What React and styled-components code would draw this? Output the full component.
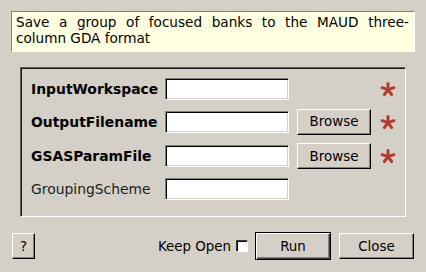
import React from 'react';
import styled, { createGlobalStyle } from 'styled-components';

const GlobalStyle = createGlobalStyle`
  html, body {
    margin: 0;
    padding: 0;
    background: #d4d0c8;
  }
  body {
    font-family: "DejaVu Sans", "Liberation Sans", sans-serif;
    font-size: 13.4px;
    color: #000;
  }
`;

const Dialog = styled.div`
  width: 426px;
  height: 272px;
  box-sizing: border-box;
  background: #d4d0c8;
  padding: 11px 11px 0 11px;
  display: flex;
  flex-direction: column;
`;

const Description = styled.div`
  box-sizing: border-box;
  height: 41px;
  background: #ffffe1;
  border-top: 1px solid #808080;
  border-left: 1px solid #808080;
  border-bottom: 1px solid #ffffff;
  border-right: 1px solid #ffffff;
  padding: 2px 5px 0 4px;
  line-height: 16px;
  font-size: 13.6px;
`;

const DescLine = styled.div`
  text-align: ${p => (p.$justify ? 'justify' : 'left')};
  text-align-last: ${p => (p.$justify ? 'justify' : 'left')};
  white-space: nowrap;
`;

const GroupBox = styled.div`
  box-sizing: border-box;
  margin: 15px 9px 0 9px;
  height: 150px;
  border-top: 1px solid #5a5a5a;
  border-left: 1px solid #5a5a5a;
  border-bottom: 1px solid #ffffff;
  border-right: 1px solid #ffffff;
  box-shadow: inset 1px 1px 0 #1a1a1a;
  padding: 10px 0 0 10px;
  display: grid;
  grid-template-columns: 134px 124px 91px 24px;
  grid-template-rows: 22px 26px 26px 22px;
  align-content: start;
  row-gap: 8.5px;
  align-items: center;
`;

const Label = styled.span`
  font-size: 13.9px;
  font-weight: ${p => (p.$required ? 'bold' : 'normal')};
  color: ${p => (p.$required ? '#000' : '#222')};
  white-space: nowrap;
`;

const Field = styled.input`
  box-sizing: border-box;
  width: 124px;
  height: 22px;
  margin: 0;
  background: #fff;
  border-top: 1px solid #808080;
  border-left: 1px solid #808080;
  border-bottom: 1px solid #ffffff;
  border-right: 1px solid #ffffff;
  box-shadow: inset 1px 1px 0 #000, inset -1px -1px 0 #d4d0c8;
  outline: none;
`;

const Button = styled.button`
  box-sizing: border-box;
  font-family: "DejaVu Sans", "Liberation Sans", sans-serif;
  font-size: 13.4px;
  color: #000;
  background: #d4d0c8;
  width: ${p => p.$w}px;
  height: 26px;
  margin: 0;
  padding: 0;
  border-top: 1px solid #ffffff;
  border-left: 1px solid #ffffff;
  border-bottom: 1px solid #000;
  border-right: 1px solid #000;
  box-shadow: inset -1px -1px 0 #808080;
`;

const DefaultButton = styled(Button)`
  height: 28px;
  border: 1px solid #000;
  box-shadow: inset 1px 1px 0 #ffffff, inset -1px -1px 0 #404040, inset -2px -2px 0 #808080;
`;

const BrowseCell = styled.div`
  display: flex;
  align-items: center;
  padding-left: 8px;
`;

const StarCell = styled.div`
  display: flex;
  align-items: center;
  justify-content: flex-start;
`;

const Footer = styled.div`
  display: flex;
  align-items: center;
  margin-top: 15px;
  padding-left: 1px;
  padding-right: 1px;
`;

const Spacer = styled.div`
  flex: 1;
`;

const KeepOpen = styled.label`
  display: flex;
  align-items: center;
  gap: 5px;
  margin-right: 7px;
`;

const CheckBox = styled.span`
  box-sizing: border-box;
  width: 12px;
  height: 12px;
  background: #fff;
  border-top: 1px solid #404040;
  border-left: 1px solid #404040;
  border-bottom: 1px solid #ffffff;
  border-right: 1px solid #ffffff;
  box-shadow: inset 1px 1px 0 #000;
`;

const FooterGap = styled.div`
  width: 8px;
`;

const Star = () => (
  <svg width="16" height="16" viewBox="0 0 16 16">
    <g stroke="#b33a2c" strokeWidth="3" strokeLinecap="round">
      {[0, 72, 144, 216, 288].map(a => (
        <line key={a} x1="8" y1="8.6" x2="8" y2="2.4" transform={`rotate(${a} 8 8.6)`} />
      ))}
    </g>
  </svg>
);

const rows = [
  { name: 'InputWorkspace', required: true, browse: false },
  { name: 'OutputFilename', required: true, browse: true },
  { name: 'GSASParamFile', required: true, browse: true },
  { name: 'GroupingScheme', required: false, browse: false },
];

const App = () => {
  return (
    <>
      <GlobalStyle />
      <Dialog>
        <Description>
          <DescLine $justify>Save a group of focused banks to the MAUD three-</DescLine>
          <DescLine>column GDA format</DescLine>
        </Description>
        <GroupBox>
          {rows.map(r => (
            <React.Fragment key={r.name}>
              <Label $required={r.required}>{r.name}</Label>
              <Field />
              <BrowseCell>{r.browse && <Button $w={74}>Browse</Button>}</BrowseCell>
              <StarCell>{r.required && <Star />}</StarCell>
            </React.Fragment>
          ))}
        </GroupBox>
        <Footer>
          <Button $w={23}>?</Button>
          <Spacer />
          <KeepOpen>
            Keep Open
            <CheckBox />
          </KeepOpen>
          <DefaultButton $w={76}>Run</DefaultButton>
          <FooterGap />
          <Button $w={75}>Close</Button>
        </Footer>
      </Dialog>
    </>
  );
};

export default App;
